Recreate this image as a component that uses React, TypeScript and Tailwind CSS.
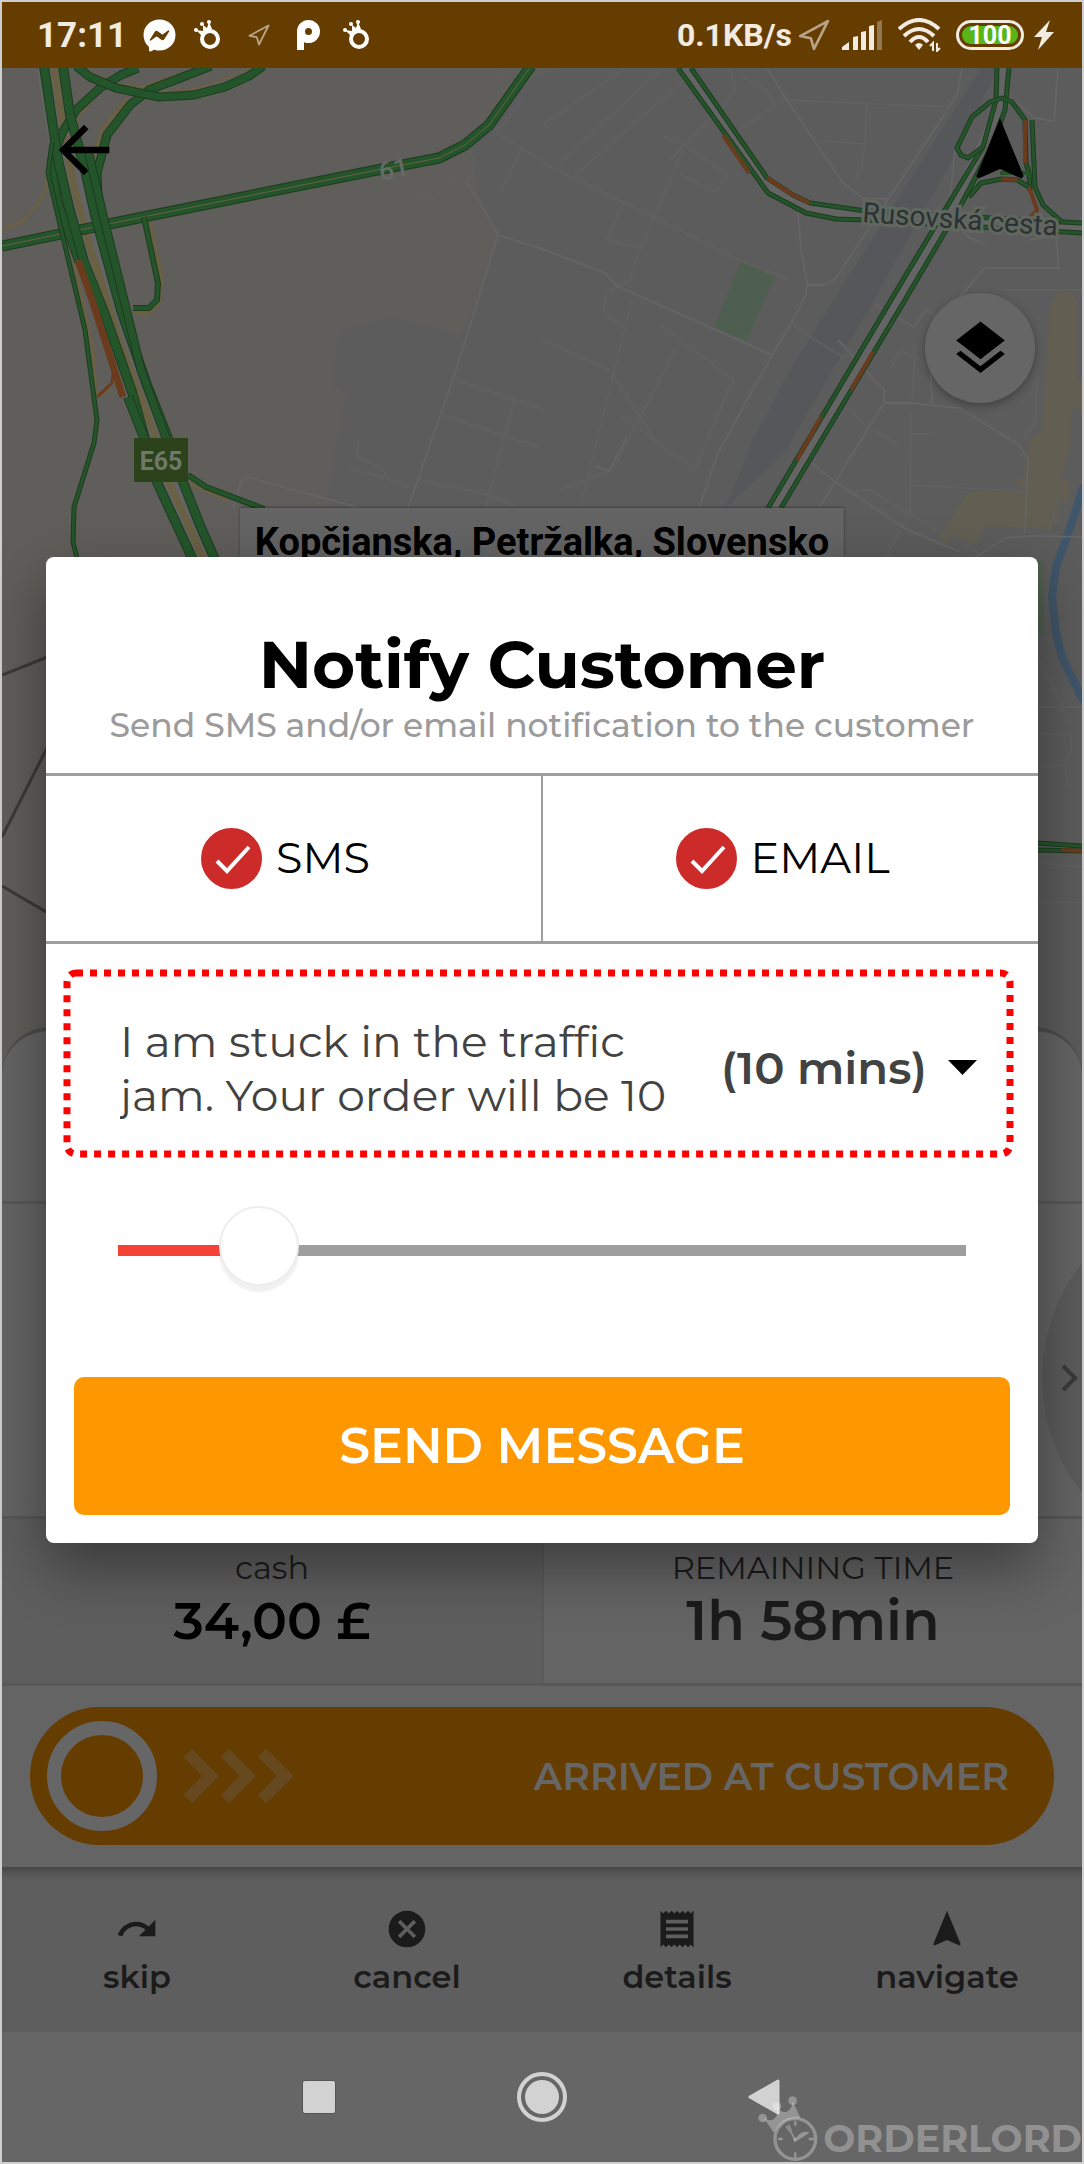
import { useState } from "react";
import type { ReactNode } from "react";
import { FaFacebookMessenger } from "react-icons/fa";
import {
  MdArrowBack,
  MdCancel,
  MdLayers,
  MdNavigation,
  MdReceipt,
  MdRedo,
} from "react-icons/md";

const GREEN = "#24542a";
const GREEN_EDGE = "#1d3b20";
const ORANGE = "#6b3b1e";
const SAND = "#6a6043";
const STREET = "#646464";
const FAINT = "#606060";

function Road({ pts, w = 4, c = GREEN, edge }: { pts: string; w?: number; c?: string; edge?: string }) {
  return (
    <>
      {edge && <polyline points={pts} stroke={edge} strokeWidth={w + 2} />}
      <polyline points={pts} stroke={c} strokeWidth={w} />
    </>
  );
}

const streets = [
  "467,183 480,202 498,235 542,249 605,273 617,286 772,355",
  "498,235 478,300 453,379 408,508",
  "962,68 957,95 888,199 836,278 825,285 807,285",
  "767,68 787,100 843,183 863,198 888,199",
  "798,213 801,250 807,283 806,295 791,323 772,355 718,453 699,508",
  "819,508 884,403 910,403 959,408 1019,445 1028,460 1025,533",
  "976,557 1005,538 1030,536 1082,537",
  "233,508 242,480 247,477 360,508",
  "810,462 836,482 906,529 960,552",
  "874,304 914,327 926,310 938,317",
  "838,340 884,390 884,403",
  "1058,68 1054,121",
  "1010,98 1026,110 1034,118 1054,121",
  "609,471 627,437",
  "595,466 609,471",
  "1030,240 1056,235 1059,268 985,268 950,308",
  "955,150 950,200 965,235 985,245",
  "930,345 932,404",
];

const faintStreets = [
  "542,163 623,202 741,261 790,280",
  "623,202 607,240 640,248 630,280 606,293 604,313 624,327",
  "663,136 683,144 728,175 715,192 680,174",
  "683,150 640,250",
  "543,125 625,68",
  "560,163 662,68",
  "574,176 690,75",
  "739,130 783,100 950,107",
  "867,105 865,144 823,141",
  "865,144 862,165 855,180",
  "730,68 735,90 725,105 670,160",
  "740,75 765,90 775,103",
  "453,379 545,410",
  "442,415 542,448",
  "515,398 482,520",
  "416,479 490,495 535,515",
  "497,68 522,100 496,133 542,160",
  "522,148 500,193",
  "415,193 430,200 455,181 467,183",
  "470,150 475,165 467,183",
  "350,469 385,478 410,487",
  "358,440 356,457 380,467 391,479",
  "632,300 580,508",
  "675,350 613,470 560,490",
  "660,325 734,380 714,424",
  "620,415 695,470 730,385",
  "790,323 815,340 845,358",
  "890,370 900,350 960,380",
  "915,345 912,400",
  "911,412 910,510 905,520 880,570",
  "911,434 935,434",
  "850,410 867,427 900,445",
  "909,485 1000,490 1025,492",
  "848,492 870,490 920,520 1000,565",
  "1037,370 1036,420 1020,445",
  "1059,490 1050,530",
  "985,330 975,360 1000,380",
  "1005,290 1082,290",
  "542,340 610,370 655,440",
  "1038,658 1070,722",
  "1038,707 1082,707",
  "1038,733 1071,735 1071,750 1065,765 1068,788",
  "1038,768 1065,765",
  "1038,863 1082,867",
  "1038,903 1082,902",
];

function MapCanvas() {
  return (
    <svg
      className="absolute inset-0 h-full w-full"
      viewBox="2 68 1080 1007"
      preserveAspectRatio="xMidYMin slice"
      fill="none"
      aria-hidden="true"
    >
      <rect x="2" y="68" width="1080" height="1007" fill="#605e5b" />
      <path
        d="M560 68 530 80 490 130 470 150 480 202 498 235 478 300 460 335 391 317 339 330 332 387 346 393 328 493 325 1075H1082V68Z"
        fill="#5c5c5c"
      />
      <path d="M981 68H998L958 150 874 300 784 453 725 508 753 440 790 370 846 280Z" fill="#55575a" />
      <path d="M741 261 775 277 746 341 714 327Z" fill="#4f5f4f" />
      <path d="M1038 560h6v75h-6Z" fill="#4f5f4f" />
      <path
        d="M1057 293 1070 291 1078 300V380L1082 382V409L1072 409 1070 450 1060 480H1069V502H1058V522L1050 529 986 526 974 545 953 534 947 546 939 537 967 494 978 491 1024 492 1013 480 1023 478 1030 440 1042 430 1050 310Z"
        fill="#625e52"
      />
      <polyline points="1084,485 1067,537 1056,567 1052,597 1056,633 1062,657 1084,702" stroke="#40566a" strokeWidth="8" />

      <g strokeLinejoin="round">
        {faintStreets.map((s) => (
          <Road key={s} pts={s} w={2} c={FAINT} />
        ))}
        {streets.map((s) => (
          <Road key={s} pts={s} w={2} c={STREET} />
        ))}

        {/* dark boundary strokes at the lower left */}
        <Road pts="2,675 60,652" w={3} c="#3a3a38" />
        <Road pts="2,837 60,722" w={3} c="#3a3a38" />
        <Road pts="2,886 60,920" w={3} c="#3a3a38" />

        {/* western motorway */}
        <Road pts="50,68 60,130 74,200 95,270 119,345 156,440 169,482 204,565" w={26} c="#646464" />
        <Road pts="2,230 21,222 41,200 48,180" w={3} c={SAND} />
        <Road pts="83,68 116,84 142,87 200,68" w={3} c={SAND} />
        <Road pts="160,92 200,88 250,68" w={2} c={SAND} />
        <Road pts="128,98 104,127 93,157" w={4} c={SAND} />
        <Road pts="100,92 80,115 68,145" w={2} c={SAND} />
        <Road pts="54,68 62,120 74,187 90,247 107,300 119,340 156,438 169,482 204,560" w={7} c={SAND} />
        <Road pts="66,215 80,290 93,350 96,395 113,390" w={3} c={SAND} />
        <Road pts="149,220 162,280 158,305 147,314 134,314" w={4} c={SAND} />
        <Road pts="190,484 228,500" w={4} c={SAND} />

        <Road pts="2,246 143,217 377,170 439,158 465,145 489,125 531,66" w={9} edge={GREEN_EDGE} />
        <Road pts="2,246 143,217 377,170 439,158 465,145 489,125 531,66" w={1} c="#6a5f48" />
        <Road pts="144,217 158,283 157,300 149,308 133,308" w={4} edge={GREEN_EDGE} />

        <Road pts="138,68 121,75 100,88 76,110 62,133 52,160 57,200 79,262" w={7} edge={GREEN_EDGE} />
        <Road pts="211,66 149,90 130,105 107,135 97,173 98,201" w={7} edge={GREEN_EDGE} />
        <Road pts="76,66 90,77 116,88 159,97 194,95 225,87 249,76 263,66" w={7} edge={GREEN_EDGE} />
        <Road pts="44,66 52,120 58,160 69,207 84,262 104,312 132,392 157,482 194,562" w={8} edge={GREEN_EDGE} />
        <Road pts="128,397 145,440" w={8} edge={GREEN_EDGE} />
        <Road pts="63,66 70,115 85,170 95,215 110,270 121,310 147,385 168,438 183,482 199,523 216,562" w={8} edge={GREEN_EDGE} />
        <Road pts="88,150 103,215 124,300 141,370 166,438" w={7} edge={GREEN_EDGE} />
        <Road pts="52,143 48,173 62,233 78,300 85,330 97,420 94,443 74,507 73,542 78,562" w={3} edge={GREEN_EDGE} />
        <Road pts="78,260 92,300 123,397" w={7} c={ORANGE} />
        <Road pts="97,397 112,383 113,374" w={3} c={ORANGE} />
        <Road pts="188,475 206,487 264,509" w={4} edge={GREEN_EDGE} />

        {/* eastern roads */}
        <Road pts="684,68 768,186 806,208 860,215 1082,228" w={9} c={STREET} />
        <Road pts="1003,68 1000,105 954,206 775,508" w={9} c={STREET} />
        <Road pts="678,68 768,193 806,213 836,219 866,220 1082,233" w={3} edge={GREEN_EDGE} />
        <Road pts="691,68 767,178 793,195 810,203 866,211 1062,222 1082,223" w={3} edge={GREEN_EDGE} />
        <Road pts="723,135 749,173" w={4} c={ORANGE} />
        <Road pts="767,178 793,195 810,203" w={4} c={ORANGE} />
        <Road pts="997,68 996,100 983,147 946,208 891,300 768,508" w={3} edge={GREEN_EDGE} />
        <Road pts="1009,68 1005,110 990,150 962,203 905,300 781,508" w={3} edge={GREEN_EDGE} />
        <Road pts="1030,190 1029,173 1026,163 1025,120 1012,102 1002,98 990,102 972,117 957,148 961,155 968,158 983,147" w={3} edge={GREEN_EDGE} />
        <Road pts="1032,120 1035,187 1043,205 1062,222" w={3} edge={GREEN_EDGE} />
        <Road pts="969,197 981,183 1002,179 1017,180 1029,187" w={3} edge={GREEN_EDGE} />
        <Road pts="1000,173 1030,173" w={4} />
        <Road pts="1025,120 1025,163" w={4} c={ORANGE} />
        <Road pts="1002,179 1017,180" w={4} c={ORANGE} />
        <Road pts="1029,187 1037,210 1030,218" w={4} c={ORANGE} />
        <Road pts="821,417 797,460" w={4} c={ORANGE} />
        <Road pts="873,352 851,390" w={4} c={ORANGE} />
        <Road pts="1036,843 1082,846" w={3} edge={GREEN_EDGE} />
        <Road pts="1036,850 1082,851" w={3} edge={GREEN_EDGE} />
        <Road pts="1062,850 1082,851" w={4} c={ORANGE} />
      </g>

      <text
        transform="rotate(4 862 222)"
        x="862"
        y="222"
        className="font-['Roboto'] text-[28px]"
        fill="#2c3133"
        stroke="#5f675f"
        strokeWidth="6"
        paintOrder="stroke"
      >
        Rusovská cesta
      </text>
      <text
        transform="rotate(-12 381 181)"
        x="381"
        y="181"
        className="font-['Roboto'] text-[26px] font-medium"
        fill="#666b66"
      >
        61
      </text>
      <rect x="134" y="438" width="54" height="44" fill="#2c421a" />
      <text x="161" y="470" textAnchor="middle" className="font-['Roboto'] text-[25px] font-bold" fill="#70786a">
        E65
      </text>
    </svg>
  );
}

function CrownBadge() {
  return (
    <svg className="h-[30px] w-[26px] shrink-0" viewBox="0 0 26 30" fill="none" aria-hidden="true">
      <circle cx="16" cy="19" r="8" stroke="#fff" strokeWidth="4" />
      <path d="M2 10 8 16 18 9 15 2 13 8 9 5 9 11Z" fill="#fff" />
      <circle cx="2" cy="10" r="2" fill="#fff" />
      <circle cx="8" cy="4" r="2" fill="#fff" />
      <circle cx="15" cy="2" r="2" fill="#fff" />
    </svg>
  );
}

function LocationOutline({ className }: { className: string }) {
  return (
    <svg className={className} viewBox="0 0 30 30" fill="none" aria-hidden="true">
      <path d="M28 2 2 16 12 18 15 28Z" stroke="#b9a488" strokeWidth="2.5" strokeLinejoin="round" />
    </svg>
  );
}

function StatusBar() {
  return (
    <header className="flex h-[66px] items-center justify-between bg-[#663d00] pr-7 pl-[35px] font-['Roboto',sans-serif] text-[#f2ebe2]">
      <div className="flex items-center">
        <span className="text-[35px] leading-none font-bold">17:11</span>
        <FaFacebookMessenger className="ml-4 size-[33px] text-white" />
        <span className="ml-[18px] flex">
          <CrownBadge />
        </span>
        <LocationOutline className="ml-[28px] size-[22px]" />
        <svg className="ml-[26px] h-[30px] w-[24px]" viewBox="0 0 24 30" fill="none" aria-hidden="true">
          <circle cx="12.500" cy="11.500" r="7.500" stroke="#fff" strokeWidth="8" />
          <rect x="1" y="11" width="7" height="19" fill="#fff" />
        </svg>
        <span className="ml-[23px] flex">
          <CrownBadge />
        </span>
      </div>
      <div className="flex items-center">
        <span className="text-[32px] leading-none font-bold">0.1KB/s</span>
        <LocationOutline className="ml-[6px] size-[32px]" />
        <svg className="ml-[12px] h-[30px] w-[40px]" viewBox="0 0 40 30" aria-hidden="true">
          <path d="M0 30V27L7 22V30ZM11 30V17L16 16V30ZM19 30V12L24 11V30ZM27 30V6L32 5V30Z" fill="#f2ebe2" />
          <path d="M35 30V2L40 0V30Z" fill="#947854" />
        </svg>
        <svg className="ml-[16px] h-[34px] w-[43px]" viewBox="0 0 43 34" fill="none" aria-hidden="true">
          <g stroke="#f2ebe2" strokeWidth="4">
            <path d="M1 11Q21-7 41 11" />
            <path d="M6 18Q21 4 36 18" />
            <path d="M12 24Q21 14 30 24" />
          </g>
          <path d="M17 27Q21 23 25 27L21 32Z" fill="#f2ebe2" />
          <path d="M35 33V25L32 28M39 25V33L42 30" stroke="#f2ebe2" strokeWidth="2" />
        </svg>
        <div className="ml-[15px] flex h-[30px] w-[68px] items-center rounded-full border-[3px] border-[#f2ebe2] p-[3px]">
          <span className="flex h-full w-full items-center justify-center rounded-full bg-[#58b515] text-[25px] leading-none font-bold text-white">
            100
          </span>
        </div>
        <svg className="ml-[10px] h-[30px] w-[20px]" viewBox="0 0 20 30" aria-hidden="true">
          <path d="M16 0 0 17H8L4 30 20 12H12Z" fill="#f2ebe2" />
        </svg>
      </div>
    </header>
  );
}

function CheckOption({ label }: { label: string }) {
  const [on, setOn] = useState(true);
  return (
    <label className="flex flex-1 cursor-pointer items-center justify-center gap-3.5 pr-4 text-[43px] font-normal text-black">
      <span className="relative flex size-[61px]">
        <input
          type="checkbox"
          checked={on}
          onChange={(e) => setOn(e.target.checked)}
          className="size-[61px] appearance-none rounded-full border-2 border-[#cd2a2a] checked:bg-[#cd2a2a]"
        />
        {on && (
          <svg className="pointer-events-none absolute inset-0" viewBox="0 0 61 61" fill="none" aria-hidden="true">
            <path d="M16 33 26 43 48 19" stroke="#fff" strokeWidth="4" />
          </svg>
        )}
      </span>
      {label}
    </label>
  );
}

function NotifyDialog() {
  const [minutes, setMinutes] = useState(10);
  const [message, setMessage] = useState("I am stuck in the traffic jam. Your order will be 10 minutes late.");
  const max = 60;

  return (
    <section
      role="dialog"
      aria-modal="true"
      aria-labelledby="notify-title"
      className="flex w-full flex-col rounded-[8px] bg-white shadow-[0_24px_60px_rgba(0,0,0,0.4)]"
    >
      <div className="px-6 pt-[70px] pb-[26px] text-center">
        <h1 id="notify-title" className="text-[66px] leading-[76px] font-bold text-black">
          Notify Customer
        </h1>
        <p className="text-[33px] leading-[44px] font-medium text-[#9b9b9b]">
          Send SMS and/or email notification to the customer
        </p>
      </div>

      <div className="flex h-[171px] divide-x-2 divide-[#9e9e9e] border-y-[3px] border-[#9e9e9e]">
        <CheckOption label="SMS" />
        <CheckOption label="EMAIL" />
      </div>

      <div className="relative mt-[26px] mr-[25px] ml-[18px] flex h-[187px] items-center justify-between pt-2 pr-[36px] pl-[56px]">
        <svg className="pointer-events-none absolute inset-[3px] h-[calc(100%-6px)] w-[calc(100%-6px)] overflow-visible" aria-hidden="true">
          <rect width="100%" height="100%" rx="9" fill="none" stroke="#f00" strokeWidth="7" strokeDasharray="7 7" />
        </svg>
        <textarea
          aria-label="Message"
          rows={2}
          value={message}
          onChange={(e) => setMessage(e.target.value)}
          className="h-[108px] w-[572px] resize-none overflow-hidden bg-transparent text-[44px] leading-[54px] font-normal text-[#424242] outline-none"
        />
        <div className="flex items-center gap-2">
          <select
            aria-label="Delay"
            value={minutes}
            onChange={(e) => setMinutes(Number(e.target.value))}
            className="appearance-none bg-transparent text-[45px] font-semibold text-[#424242] outline-none"
          >
            {[0, 10, 20, 30, 40, 50, 60].map((m) => (
              <option key={m} value={m}>{`(${m} mins)`}</option>
            ))}
          </select>
          <svg className="h-[15px] w-[29px]" viewBox="0 0 29 15" aria-hidden="true">
            <path d="M0 0H29L14.500 15Z" fill="#000" />
          </svg>
        </div>
      </div>

      <div className="relative mx-[72px] mt-[54px] mb-[88px] flex h-[78px] items-center">
        <div className="h-[11px] w-full bg-[#9e9e9e]">
          <div className="h-full bg-[#f44336]" style={{ width: `${(minutes / max) * 100}%` }} />
        </div>
        <input
          type="range"
          aria-label="Delay in minutes"
          min={0}
          max={max}
          step={10}
          value={minutes}
          onChange={(e) => setMinutes(Number(e.target.value))}
          className="absolute top-0 -right-[40px] -left-[40px] h-[70px] cursor-pointer appearance-none bg-transparent outline-none [&::-webkit-slider-thumb]:size-[80px] [&::-webkit-slider-thumb]:appearance-none [&::-webkit-slider-thumb]:rounded-full [&::-webkit-slider-thumb]:border-2 [&::-webkit-slider-thumb]:border-[#ededed] [&::-webkit-slider-thumb]:bg-white [&::-webkit-slider-thumb]:shadow-[0_6px_2px_rgba(0,0,0,0.06)]"
        />
      </div>

      <button
        type="button"
        className="mx-[28px] mb-[28px] h-[138px] rounded-[10px] bg-[#ff9800] text-[49px] font-semibold text-white"
      >
        SEND MESSAGE
      </button>
    </section>
  );
}

function TabButton({ icon, label }: { icon: ReactNode; label: string }) {
  return (
    <button type="button" className="flex flex-1 flex-col items-center gap-1 pt-[40px] text-[#1b1b1b]">
      {icon}
      <span className="text-[32px] leading-[44px] font-semibold">{label}</span>
    </button>
  );
}

function OrderSheet() {
  return (
    <section className="relative -mt-12 overflow-hidden rounded-t-[48px] border-t-4 border-[#4d4d4b] bg-[#646464]">
      <div className="h-[173px] border-b-[3px] border-[#585858]" />
      <div className="h-[315px] border-b-[3px] border-[#575757]" />
      <button
        type="button"
        aria-label="Next order"
        className="absolute top-[162px] -right-[330px] flex size-[370px] items-center rounded-full bg-[#5b5b5b] pl-[19px]"
      >
        <svg className="h-[28px] w-[17px]" viewBox="0 0 17 28" fill="none" aria-hidden="true">
          <path d="M2 2 14 14 2 26" stroke="#3a3a3a" strokeWidth="4" />
        </svg>
      </button>
      <dl className="grid h-[167px] grid-cols-2 border-b-[3px] border-[#585858] text-center">
        <div className="bg-[#5e5e5e] pt-[27px]">
          <dt className="text-[32px] leading-[44px] font-normal text-[#1b1b1b]">cash</dt>
          <dd className="text-[52px] leading-[62px] font-semibold text-black">34,00 £</dd>
        </div>
        <div className="border-l-2 border-[#5a5a5a] pt-[27px]">
          <dt className="text-[32px] leading-[44px] font-normal text-[#1b1b1b]">REMAINING TIME</dt>
          <dd className="text-[55px] leading-[62px] font-semibold text-[#1b1b1b]">1h 58min</dd>
        </div>
      </dl>
      <div className="px-7 pt-[21px] pb-[22px]">
        <button
          type="button"
          className="flex h-[138px] w-full items-center rounded-full bg-[#663d00] pr-[45px] pl-[17px] text-[#666666]"
        >
          <span className="size-[110px] rounded-full border-[14px] border-[#666666]" />
          <svg className="ml-[27px] h-[54px] w-[109px]" viewBox="0 0 109 54" fill="none" aria-hidden="true">
            <g stroke="#66491f" strokeWidth="12">
              <path d="M4 4 27 27 4 50" />
              <path d="M41 4 64 27 41 50" />
              <path d="M78 4 101 27 78 50" />
            </g>
          </svg>
          <span className="ml-auto text-[38px] font-semibold">ARRIVED AT CUSTOMER</span>
        </button>
      </div>
    </section>
  );
}

function Watermark() {
  return (
    <div className="pointer-events-none absolute right-0 bottom-0 flex items-end gap-1 text-white/30">
      <svg className="h-[67px] w-[61px]" viewBox="60 40 183 201" fill="none" aria-hidden="true">
        <path
          d="M77 109Q98 122 110 110 122 100 117 76 130 95 146 90 162 84 164 59L188 110Q135 105 108 153Z"
          fill="currentColor"
        />
        <circle cx="74" cy="109" r="13" fill="currentColor" />
        <circle cx="117" cy="74" r="13" fill="currentColor" />
        <circle cx="164" cy="57" r="13" fill="currentColor" />
        <circle cx="172" cy="172" r="61" stroke="currentColor" strokeWidth="10" />
        <path d="M172 118V132M172 212V228M120 172H134M212 172H228" stroke="currentColor" strokeWidth="7" />
        <path d="M145 133 155 150M151 129 160 147M157 147 172 176" stroke="currentColor" strokeWidth="5" />
        <path d="M170 182Q160 170 176 166 192 146 215 152 202 164 182 174Z" fill="currentColor" />
      </svg>
      <span className="text-[38px] leading-[46px] font-bold">ORDERLORD</span>
    </div>
  );
}

export default function App() {
  return (
    <div className="flex min-h-screen flex-col border-2 border-[#cfcfcf] bg-[#666666] font-['Montserrat','Inter',sans-serif]">
      <StatusBar />
      <main className="relative flex flex-1 flex-col">
        <section className="relative min-h-[600px] flex-1 overflow-hidden" aria-label="Map">
          <MapCanvas />
          <button type="button" aria-label="Back" className="absolute top-[44px] left-[44px] text-black">
            <MdArrowBack className="size-[76px]" />
          </button>
          <button type="button" aria-label="Navigate" className="absolute top-[44px] right-[44px] text-black">
            <MdNavigation className="size-[76px]" />
          </button>
          <button
            type="button"
            aria-label="Map layers"
            className="absolute top-[225px] right-[47px] flex size-[110px] items-center justify-center rounded-full bg-[#666666] text-black shadow-[0_3px_8px_rgba(0,0,0,0.3)]"
          >
            <MdLayers className="size-[65px]" />
          </button>
          <div className="absolute top-[440px] left-1/2 -translate-x-1/2 bg-[#646464] px-[15px] pt-[12px] pb-5 font-['Roboto',sans-serif] text-[38px] leading-[44px] font-bold whitespace-nowrap text-black shadow-[0_0_3px_rgba(0,0,0,0.6)]">
            Kopčianska, Petržalka, Slovensko
          </div>
        </section>
        <OrderSheet />
        <nav className="flex h-[165px] bg-[#5e5e5e] shadow-[inset_0_12px_10px_-8px_rgba(0,0,0,0.3)]">
          <TabButton icon={<MdRedo className="size-[44px]" />} label="skip" />
          <TabButton icon={<MdCancel className="size-[44px]" />} label="cancel" />
          <TabButton icon={<MdReceipt className="size-[44px]" />} label="details" />
          <TabButton icon={<MdNavigation className="size-[44px]" />} label="navigate" />
        </nav>
        <div className="absolute inset-0 flex items-center px-[44px]">
          <NotifyDialog />
        </div>
      </main>
      <footer className="relative flex h-[130px] items-center justify-center gap-[181px] overflow-hidden">
        <button type="button" aria-label="Recent apps" className="size-[34px] rounded-[3px] border border-[#555555] bg-[#d2d2d2]" />
        <button
          type="button"
          aria-label="Home"
          className="flex size-[50px] items-center justify-center rounded-full border-4 border-[#d2d2d2]"
        >
          <span className="size-[34px] rounded-full bg-[#d2d2d2]" />
        </button>
        <button type="button" aria-label="System back">
          <svg className="h-[38px] w-[34px]" viewBox="0 0 34 38" aria-hidden="true">
            <path d="M2 19 30 3V35Z" fill="#d2d2d2" stroke="#d2d2d2" strokeWidth="3" strokeLinejoin="round" />
          </svg>
        </button>
        <Watermark />
      </footer>
    </div>
  );
}
